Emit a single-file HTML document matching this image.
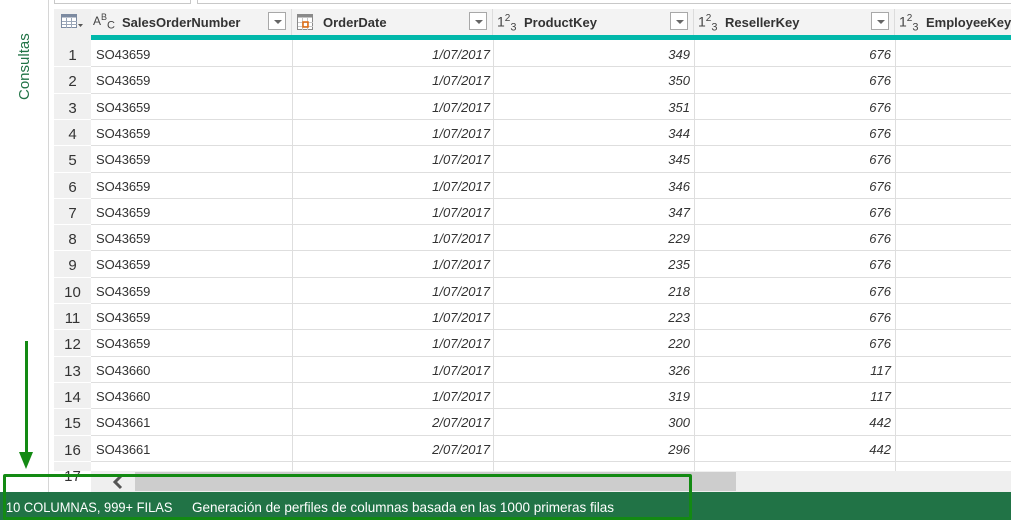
<!DOCTYPE html>
<html><head><meta charset="utf-8"><style>
*{margin:0;padding:0;box-sizing:border-box}
body{width:1011px;height:520px;overflow:hidden;background:#fff;font-family:"Liberation Sans",sans-serif;position:relative;font-size:13px;color:#333}
.a{position:absolute}
.hdr{position:absolute;top:9px;height:26px;background:#f3f3f3;border-right:1px solid #dcdcdc}
.teal{position:absolute;top:35px;height:5px;background:#01b8aa}
.hdr b{position:absolute;top:6px;font-weight:bold;font-size:13px;color:#333}
.dd{position:absolute;top:3px;width:18px;height:18px;border:1px solid #a8a8a8;background:#fff}
.dd:after{content:"";position:absolute;left:5px;top:7px;border-left:4px solid transparent;border-right:4px solid transparent;border-top:4px solid #666}
.n{position:absolute;font-size:13px;color:#333;letter-spacing:-0.1px}
.i{position:absolute;font-size:13px;font-style:italic;color:#333;text-align:right}
.rn{position:absolute;left:54px;width:37px;text-align:center;font-size:15px;color:#333}
.hl{position:absolute;left:91px;width:920px;height:1px;background:#dedede}
.hw{position:absolute;left:54px;width:37px;height:1px;background:#fff}
.vl{position:absolute;top:40px;width:1px;height:431px;background:#dedede}
.t123{position:absolute;top:4px;font-size:14px;color:#444}
</style></head><body>
<div class="a" style="left:54px;top:0;width:137px;height:4px;border:1px solid #c8c8c8;border-top:none"></div>
<div class="a" style="left:197px;top:0;width:814px;height:4px;border:1px solid #c8c8c8;border-top:none;border-right:none"></div>
<div class="a" style="left:48px;top:0;width:1px;height:492px;background:#d6d6d6"></div>
<div class="a" style="left:16px;top:100px;transform:rotate(-90deg);transform-origin:left top;color:#217346;font-size:15px">Consultas</div>
<div class="a" style="left:54px;top:9px;width:37px;height:462px;background:#f0f0f0"></div>
<svg class="a" style="left:61px;top:14px" width="24" height="16"><rect x="0.5" y="0.5" width="15" height="13" fill="#fff" stroke="#7d8ba1"/><rect x="0.5" y="0.5" width="15" height="3" fill="#7d8ba1"/><path d="M5.5 4v10M10.5 4v10M1 7.5h15M1 10.5h15" stroke="#9aa6b8"/><path d="M17 10h5l-2.5 3z" fill="#555"/></svg>
<div class="hdr" style="left:91px;width:201px"><span class="a" style="left:2px;top:3px;font-size:12px;color:#444">A<sup style="font-size:9px">B</sup><sub style="font-size:11px">C</sub></span><b style="left:31px">SalesOrderNumber</b><div class="dd" style="left:177px"></div></div>
<div class="hdr" style="left:292px;width:201px"><svg class="a" style="left:5px;top:5px" width="16" height="16"><rect x="0.5" y="0.5" width="15" height="15" fill="#fff" stroke="#8a8a8a"/><rect x="0.5" y="0.5" width="15" height="3" fill="#8a8a8a"/><path d="M5.5 4v12M10.5 4v12M1 8.5h15M1 12.5h15" stroke="#c8c8c8"/><rect x="6" y="8" width="5" height="5" fill="none" stroke="#e06a0f" stroke-width="1.5"/></svg><b style="left:31px">OrderDate</b><div class="dd" style="left:177px"></div></div>
<div class="hdr" style="left:493px;width:201px"><span class="t123" style="left:4px">1<sup style="font-size:10px">2</sup><sub style="font-size:11px">3</sub></span><b style="left:31px">ProductKey</b><div class="dd" style="left:177px"></div></div>
<div class="hdr" style="left:694px;width:201px"><span class="t123" style="left:4px">1<sup style="font-size:10px">2</sup><sub style="font-size:11px">3</sub></span><b style="left:31px">ResellerKey</b><div class="dd" style="left:177px"></div></div>
<div class="hdr" style="left:895px;width:116px;border:none"><span class="t123" style="left:4px">1<sup style="font-size:10px">2</sup><sub style="font-size:11px">3</sub></span><b style="left:31px">EmployeeKey</b></div>
<div class="teal" style="left:91px;width:920px"></div>
<div class="vl" style="left:292px"></div><div class="vl" style="left:493px"></div><div class="vl" style="left:694px"></div><div class="vl" style="left:895px"></div>
<div id="rows"></div>
<div class="a" style="left:91px;top:471px;width:920px;height:21px;background:#efefef"></div>
<div class="a" style="left:135px;top:472px;width:601px;height:19px;background:#cdcdcd"></div>
<svg class="a" style="left:112px;top:474px" width="12" height="16"><path d="M9 2L3 8l6 6" fill="none" stroke="#555" stroke-width="3"/></svg>
<div class="a" style="left:0;top:492px;width:1011px;height:28px;background:#217346;color:#fff;font-size:14px"><span class="a" style="left:6px;top:7px;transform:scaleX(0.92);transform-origin:left">10 COLUMNAS, 999+ FILAS</span><span class="a" style="left:192px;top:7px;transform:scaleX(0.965);transform-origin:left">Generación de perfiles de columnas basada en las 1000 primeras filas</span></div>
<div class="a" style="left:3px;top:474px;width:689px;height:46px;border:3px solid #138a13;border-radius:2px"></div>
<div class="a" style="left:25px;top:341px;width:3px;height:112px;background:#138a13"></div>
<div class="a" style="left:19px;top:452px;border-left:7px solid transparent;border-right:7px solid transparent;border-top:17px solid #138a13"></div>
<script>
var d=[["SO43659","1/07/2017",349,676],["SO43659","1/07/2017",350,676],["SO43659","1/07/2017",351,676],["SO43659","1/07/2017",344,676],["SO43659","1/07/2017",345,676],["SO43659","1/07/2017",346,676],["SO43659","1/07/2017",347,676],["SO43659","1/07/2017",229,676],["SO43659","1/07/2017",235,676],["SO43659","1/07/2017",218,676],["SO43659","1/07/2017",223,676],["SO43659","1/07/2017",220,676],["SO43660","1/07/2017",326,117],["SO43660","1/07/2017",319,117],["SO43661","2/07/2017",300,442],["SO43661","2/07/2017",296,442],["","","",""]];
var h="";
for(var k=0;k<17;k++){var y=41+k*26.3;var r=d[k];
h+='<div class="rn" style="top:'+(y+6)+'px;height:18px">'+(k+1)+'</div>';
if(k<16){h+='<div class="n" style="left:96px;top:'+(y+6)+'px">'+r[0]+'</div>';
h+='<div class="i" style="left:293px;width:197px;top:'+(y+6)+'px">'+r[1]+'</div>';
h+='<div class="i" style="left:494px;width:196px;top:'+(y+6)+'px">'+r[2]+'</div>';
h+='<div class="i" style="left:695px;width:196px;top:'+(y+6)+'px">'+r[3]+'</div>';}
h+='<div class="hl" style="top:'+(y+25.3)+'px"></div><div class="hw" style="top:'+(y+25.3)+'px"></div>';}
document.getElementById("rows").innerHTML=h;
</script>
</body></html>
